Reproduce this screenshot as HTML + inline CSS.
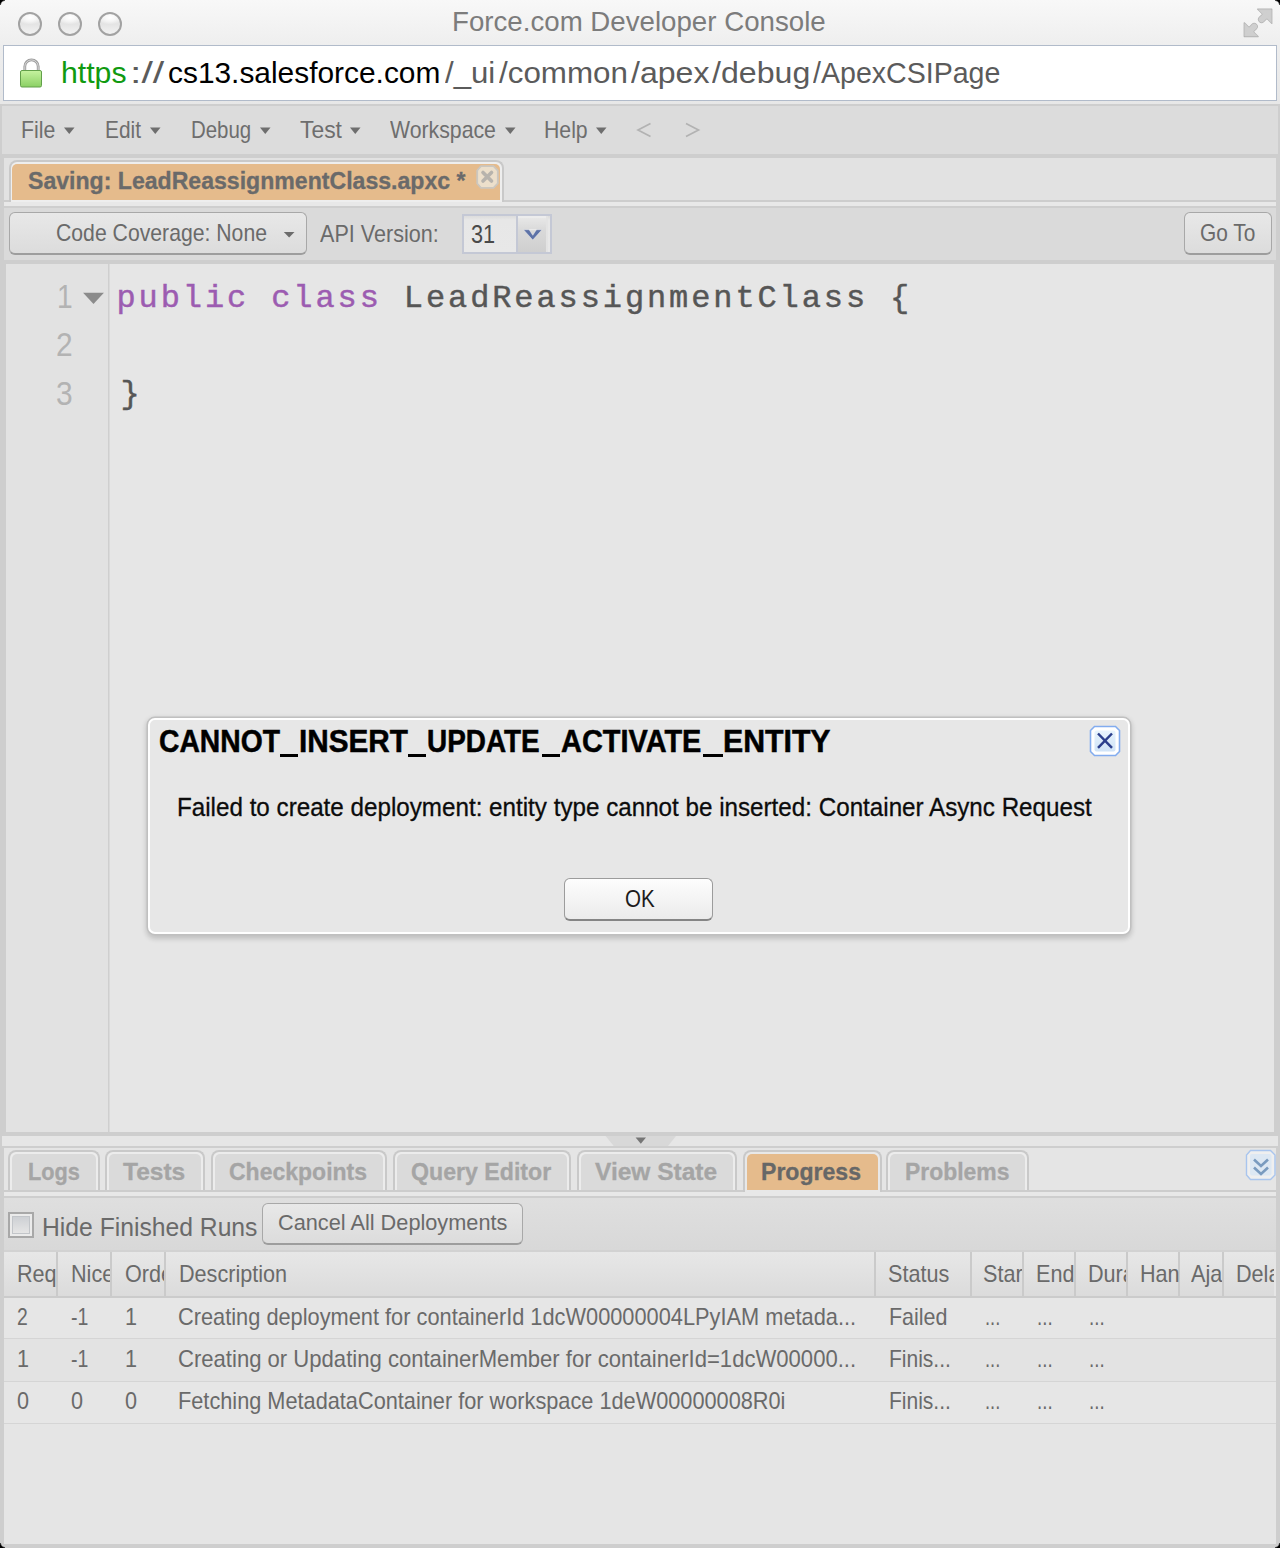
<!DOCTYPE html>
<html><head><meta charset="utf-8">
<style>
html,body{margin:0;padding:0;}
body{width:1280px;height:1548px;position:relative;overflow:hidden;background:#e5e5e5;font-family:"Liberation Sans",sans-serif;}
.a{position:absolute;}
.t{position:absolute;white-space:nowrap;line-height:1;}
</style></head><body>
<div class="a" style="left:0px;top:0px;width:1280px;height:1548px;background:#cecece;"></div>
<div class="a" style="left:0px;top:0px;width:1280px;height:104px;background:linear-gradient(#f8f8f8,#eeeeee 45%,#e7e7e7);"></div>
<div class="a" style="left:0;top:0;width:5px;height:5px;background:radial-gradient(circle at 5px 5px,transparent 3.5px,#000 5px);"></div>
<div class="a" style="left:1275px;top:0;width:5px;height:5px;background:radial-gradient(circle at 0 5px,transparent 3.5px,#000 5px);"></div>
<div class="a" style="left:0;top:1543px;width:5px;height:5px;background:radial-gradient(circle at 5px 0,transparent 3.5px,#000 5px);"></div>
<div class="a" style="left:1275px;top:1543px;width:5px;height:5px;background:radial-gradient(circle at 0 0,transparent 3.5px,#000 5px);"></div>
<div class="t" style="left:452.30px;top:8.29px;font-size:28px;font-family:'Liberation Sans',sans-serif;color:#7c7c7c;transform:scaleX(0.9881);transform-origin:0 0;">Force.com Developer Console</div>
<div class="a" style="left:18px;top:12px;width:24px;height:24px;box-sizing:border-box;border-radius:50%;border:2px solid #a2a2a2;background:radial-gradient(ellipse 60% 35% at 50% 18%,#ffffff 0,rgba(255,255,255,0.6) 50%,rgba(255,255,255,0) 100%),linear-gradient(#eeeeee,#e4e4e4 50%,#f2f2f2);"></div>
<div class="a" style="left:58px;top:12px;width:24px;height:24px;box-sizing:border-box;border-radius:50%;border:2px solid #a2a2a2;background:radial-gradient(ellipse 60% 35% at 50% 18%,#ffffff 0,rgba(255,255,255,0.6) 50%,rgba(255,255,255,0) 100%),linear-gradient(#eeeeee,#e4e4e4 50%,#f2f2f2);"></div>
<div class="a" style="left:98px;top:12px;width:24px;height:24px;box-sizing:border-box;border-radius:50%;border:2px solid #a2a2a2;background:radial-gradient(ellipse 60% 35% at 50% 18%,#ffffff 0,rgba(255,255,255,0.6) 50%,rgba(255,255,255,0) 100%),linear-gradient(#eeeeee,#e4e4e4 50%,#f2f2f2);"></div>
<svg class="a" style="left:1240px;top:6px" width="36" height="36" viewBox="0 0 36 36">
<g stroke="#b3b3b3" stroke-linejoin="round">
<path d="M17.6 3.2 L31.8 3.2 L31.8 17.4 Z" fill="#b3b3b3" stroke-width="1.2"/>
<path d="M26.2 9 L21.6 13.4" stroke-width="7.2" stroke-linecap="round"/>
<path d="M4.2 16.8 L4.2 30.6 L18.2 30.6 Z" fill="#b3b3b3" stroke-width="1.2"/>
<path d="M9.8 25 L14.2 20.6" stroke-width="7.2" stroke-linecap="round"/>
</g>
<g stroke="#cfcfcf" stroke-linejoin="round">
<path d="M18.4 3.8 L31.2 3.8 L31.2 16.6 Z" fill="#cfcfcf" stroke-width="0.6"/>
<path d="M26.2 9 L21.6 13.4" stroke-width="5.8" stroke-linecap="round"/>
<path d="M4.8 17.6 L4.8 30 L17.4 30 Z" fill="#cfcfcf" stroke-width="0.6"/>
<path d="M9.8 25 L14.2 20.6" stroke-width="5.8" stroke-linecap="round"/>
</g>
</svg>
<div class="a" style="left:3px;top:45px;width:1272px;height:54px;background:#fff;border:1px solid #b1bbca;"></div>
<svg class="a" style="left:19px;top:58px" width="25" height="31" viewBox="0 0 25 31">
<defs><linearGradient id="lg" x1="0" y1="0" x2="0" y2="1"><stop offset="0" stop-color="#c6f3a0"/><stop offset="1" stop-color="#8bd064"/></linearGradient></defs>
<path d="M5.8 13 V8.6 A6.7 6.7 0 0 1 19.2 8.6 V13" fill="none" stroke="#9b9b9b" stroke-width="2.8"/>
<path d="M5.8 13 V8.6 A6.7 6.7 0 0 1 19.2 8.6 V13" fill="none" stroke="#dedede" stroke-width="0.9"/>
<rect x="1.5" y="12.5" width="21" height="16.5" rx="1.5" fill="url(#lg)" stroke="#62a04a" stroke-width="1"/>
</svg>
<div class="t" style="left:60.50px;top:58.40px;font-size:30px;font-family:'Liberation Sans',sans-serif;color:#109a10;transform:scaleX(1.0077);transform-origin:0 0;">https</div>
<div class="t" style="left:130.00px;top:58.40px;font-size:30px;font-family:'Liberation Sans',sans-serif;color:#5b5b5b;transform:scaleX(1.3705);transform-origin:0 0;">://</div>
<div class="t" style="left:167.50px;top:58.40px;font-size:30px;font-family:'Liberation Sans',sans-serif;color:#000;transform:scaleX(0.9960);transform-origin:0 0;">cs13.salesforce.com</div>
<div class="t" style="left:444.70px;top:58.40px;font-size:30px;font-family:'Liberation Sans',sans-serif;color:#5b5b5b;transform:scaleX(1.0393);transform-origin:0 0;">/_ui</div>
<div class="t" style="left:498.60px;top:58.40px;font-size:30px;font-family:'Liberation Sans',sans-serif;color:#5b5b5b;transform:scaleX(1.0446);transform-origin:0 0;">/common</div>
<div class="t" style="left:631.00px;top:58.40px;font-size:30px;font-family:'Liberation Sans',sans-serif;color:#5b5b5b;transform:scaleX(1.0695);transform-origin:0 0;">/apex</div>
<div class="t" style="left:711.90px;top:58.40px;font-size:30px;font-family:'Liberation Sans',sans-serif;color:#5b5b5b;transform:scaleX(1.0708);transform-origin:0 0;">/debug</div>
<div class="t" style="left:812.60px;top:58.40px;font-size:30px;font-family:'Liberation Sans',sans-serif;color:#5b5b5b;transform:scaleX(0.9522);transform-origin:0 0;">/ApexCSIPage</div>
<div class="a" style="left:2px;top:106px;width:1276px;height:48px;background:#dcdcdc;"></div>
<div class="t" style="left:21.10px;top:117.58px;font-size:24px;font-family:'Liberation Sans',sans-serif;color:#6e6e6e;transform:scaleX(0.8863);transform-origin:0 0;">File</div>
<div class="t" style="left:105.00px;top:117.58px;font-size:24px;font-family:'Liberation Sans',sans-serif;color:#6e6e6e;transform:scaleX(0.8696);transform-origin:0 0;">Edit</div>
<div class="t" style="left:190.80px;top:117.58px;font-size:24px;font-family:'Liberation Sans',sans-serif;color:#6e6e6e;transform:scaleX(0.8515);transform-origin:0 0;">Debug</div>
<div class="t" style="left:300.00px;top:117.58px;font-size:24px;font-family:'Liberation Sans',sans-serif;color:#6e6e6e;transform:scaleX(0.9523);transform-origin:0 0;">Test</div>
<div class="t" style="left:390.00px;top:117.58px;font-size:24px;font-family:'Liberation Sans',sans-serif;color:#6e6e6e;transform:scaleX(0.8855);transform-origin:0 0;">Workspace</div>
<div class="t" style="left:544.00px;top:117.58px;font-size:24px;font-family:'Liberation Sans',sans-serif;color:#6e6e6e;transform:scaleX(0.8846);transform-origin:0 0;">Help</div>
<svg class="a" style="left:0;top:104px" width="720" height="50"><g fill="#6e6e6e"><path d="M64 23.5 h10.5 l-5.25 6.5z"/><path d="M150 23.5 h10.5 l-5.25 6.5z"/><path d="M260 23.5 h10.5 l-5.25 6.5z"/><path d="M350 23.5 h10.5 l-5.25 6.5z"/><path d="M505 23.5 h10.5 l-5.25 6.5z"/><path d="M596 23.5 h10.5 l-5.25 6.5z"/></g><g fill="none" stroke="#b2b2b2" stroke-width="1.7"><path d="M650.5 19.5 L638 26 L650.5 32.5"/><path d="M686 19.5 L698.5 26 L686 32.5"/></g></svg>
<div class="a" style="left:4px;top:158px;width:1272px;height:48px;background:#e2e2e2;"></div>
<div class="a" style="left:4px;top:200px;width:1272px;height:2px;background:#cdcdcd;"></div>
<div class="a" style="left:4px;top:202px;width:1272px;height:4px;background:#e8e8e8;"></div>
<div class="a" style="left:9px;top:160px;width:495px;height:42px;box-sizing:border-box;border:2px solid #c9c9c9;border-bottom:none;border-radius:8px 8px 0 0;background:#eeeeee;"></div>
<div class="a" style="left:12px;top:164px;width:488px;height:36px;border-radius:5px 5px 0 0;background:#e5bb8c;"></div>
<div class="t" style="left:28.40px;top:170.03px;font-size:23px;font-family:'Liberation Sans',sans-serif;font-weight:bold;color:#6a6a6a;transform:scaleX(1.0037);transform-origin:0 0;-webkit-text-stroke:0.3px currentColor;">Saving: LeadReassignmentClass.apxc *</div>
<svg class="a" style="left:476px;top:165px" width="23" height="24"><path d="M5 1.2 H17.5 L21.8 5.5 V18.5 L17.5 22.8 H5 L1.2 18.5 V5.5 Z" fill="#ecdfcb" stroke="#cbc7c0" stroke-width="1.8"/><path d="M7 7.5 L15.5 16 M15.5 7.5 L7 16" stroke="#b2afaa" stroke-width="3.6" stroke-linecap="round" opacity="0.9"/></svg>
<div class="a" style="left:4px;top:208px;width:1272px;height:52px;background:#dadada;"></div>
<div class="a" style="left:9px;top:212px;width:296px;height:40px;border:1px solid #a8a8a8;border-bottom:2px solid #9d9d9d;border-radius:6px;background:linear-gradient(#e8e8e8,#dcdcdc);"></div>
<div class="t" style="left:56.00px;top:221.77px;font-size:23.6px;font-family:'Liberation Sans',sans-serif;color:#6a6a6a;transform:scaleX(0.8986);transform-origin:0 0;">Code Coverage: None</div>
<svg class="a" style="left:280px;top:228px" width="20" height="14"><path d="M3.8 4 h10.7 l-5.35 5.6z" fill="#6c6c6c"/></svg>
<div class="t" style="left:320.00px;top:221.68px;font-size:24px;font-family:'Liberation Sans',sans-serif;color:#6a6a6a;transform:scaleX(0.8989);transform-origin:0 0;">API Version:</div>
<div class="a" style="left:462px;top:214px;width:86px;height:36px;border:2px solid #c4c8d5;background:linear-gradient(#dcdcdc 0,#e7e7e7 4px,#e8e8e8);"></div>
<div class="a" style="left:516px;top:216px;width:2px;height:36px;background:#c4c8d5;"></div>
<div class="a" style="left:518px;top:216px;width:30px;height:36px;background:linear-gradient(#e9e9e9,#d9d9d9 40%,#cfcfcf);box-shadow:inset -2px 0 0 #e3e3e3, inset 0 2px 0 #ececec;"></div>
<div class="t" style="left:471.00px;top:221.36px;font-size:26.5px;font-family:'Liberation Sans',sans-serif;color:#4a4a4a;transform:scaleX(0.8203);transform-origin:0 0;">31</div>
<svg class="a" style="left:516px;top:215px" width="35" height="38"><path d="M7.5 14.7 L26 14.7 L16.75 25 Z M13.2 14.7 L20.4 14.7 L16.8 20.3 Z" fill="#5d72a7" fill-rule="evenodd" stroke="#f2f2f2" stroke-width="0.8" stroke-opacity="0.6"/></svg>
<div class="a" style="left:1184px;top:212px;width:86px;height:40px;border:1px solid #a8a8a8;border-bottom:2px solid #9d9d9d;border-radius:6px;background:linear-gradient(#e8e8e8,#dcdcdc);"></div>
<div class="t" style="left:1200.30px;top:221.38px;font-size:24px;font-family:'Liberation Sans',sans-serif;color:#6a6a6a;transform:scaleX(0.8695);transform-origin:0 0;">Go To</div>
<div class="a" style="left:6px;top:264px;width:1268px;height:868px;background:#e6e6e6;"></div>
<div class="a" style="left:6px;top:264px;width:102px;height:868px;background:#e2e2e2;"></div>
<div class="a" style="left:108px;top:264px;width:1px;height:868px;background:#cfcfcf;"></div>
<div class="a" style="left:109px;top:264px;width:1px;height:868px;background:#dadada;"></div>
<div class="t" style="left:56.50px;top:280.16px;font-size:33px;font-family:'Liberation Sans',sans-serif;color:#b3b3b3;transform:scaleX(0.8533);transform-origin:0 0;">1</div>
<div class="t" style="left:55.50px;top:327.96px;font-size:33px;font-family:'Liberation Sans',sans-serif;color:#b3b3b3;transform:scaleX(0.9076);transform-origin:0 0;">2</div>
<div class="t" style="left:55.50px;top:376.56px;font-size:33px;font-family:'Liberation Sans',sans-serif;color:#b3b3b3;transform:scaleX(0.9076);transform-origin:0 0;">3</div>
<svg class="a" style="left:82px;top:291px" width="24" height="15"><path d="M1.1 1.75 h20.8 l-10.4 11.2z" fill="#8b8b8b"/></svg>
<div class="t" style="left:116.50px;top:283.28px;font-size:32px;font-family:'Liberation Mono',monospace;color:#565656;letter-spacing:2.9px;-webkit-text-stroke:0.45px currentColor;"><span style="color:#9c5cb1">public</span> <span style="color:#9c5cb1">class</span> LeadReassignmentClass {</div>
<div class="t" style="left:120.50px;top:378.98px;font-size:32px;font-family:'Liberation Mono',monospace;color:#565656;letter-spacing:2.9px;-webkit-text-stroke:0.45px currentColor;">}</div>
<div class="a" style="left:2px;top:1136px;width:1276px;height:10px;background:#e6e6e6;"></div>
<svg class="a" style="left:600px;top:1136px" width="80" height="10"><path d="M5.6 0 H76 L68 10 H13.75z" fill="#d8d8d8"/><path d="M35.6 1.5 H46 L40.8 7.8z" fill="#767676"/></svg>
<div class="a" style="left:4px;top:1148px;width:1272px;height:42px;background:#e5e5e5;"></div>
<div class="a" style="left:4px;top:1190px;width:1272px;height:2px;background:#cdcdcd;"></div>
<div class="a" style="left:4px;top:1192px;width:1272px;height:4px;background:#e8e8e8;"></div>
<div class="a" style="left:8px;top:1150px;width:92px;height:40px;box-sizing:border-box;border:2px solid #c9c9c9;border-bottom:none;border-radius:8px 8px 0 0;background:#ececec;"></div>
<div class="a" style="left:12px;top:1154px;width:84px;height:36px;border-radius:5px 5px 0 0;background:#dadada;"></div>
<div class="t" style="left:27.50px;top:1159.98px;font-size:24px;font-family:'Liberation Sans',sans-serif;font-weight:bold;color:#a5a5a5;transform:scaleX(0.9058);transform-origin:0 0;-webkit-text-stroke:0.3px currentColor;">Logs</div>
<div class="a" style="left:105px;top:1150px;width:100px;height:40px;box-sizing:border-box;border:2px solid #c9c9c9;border-bottom:none;border-radius:8px 8px 0 0;background:#ececec;"></div>
<div class="a" style="left:109px;top:1154px;width:92px;height:36px;border-radius:5px 5px 0 0;background:#dadada;"></div>
<div class="t" style="left:122.75px;top:1159.98px;font-size:24px;font-family:'Liberation Sans',sans-serif;font-weight:bold;color:#a5a5a5;transform:scaleX(1.0222);transform-origin:0 0;-webkit-text-stroke:0.3px currentColor;">Tests</div>
<div class="a" style="left:211px;top:1150px;width:176px;height:40px;box-sizing:border-box;border:2px solid #c9c9c9;border-bottom:none;border-radius:8px 8px 0 0;background:#ececec;"></div>
<div class="a" style="left:215px;top:1154px;width:168px;height:36px;border-radius:5px 5px 0 0;background:#dadada;"></div>
<div class="t" style="left:229.00px;top:1159.98px;font-size:24px;font-family:'Liberation Sans',sans-serif;font-weight:bold;color:#a5a5a5;transform:scaleX(0.9583);transform-origin:0 0;-webkit-text-stroke:0.3px currentColor;">Checkpoints</div>
<div class="a" style="left:393px;top:1150px;width:178px;height:40px;box-sizing:border-box;border:2px solid #c9c9c9;border-bottom:none;border-radius:8px 8px 0 0;background:#ececec;"></div>
<div class="a" style="left:397px;top:1154px;width:170px;height:36px;border-radius:5px 5px 0 0;background:#dadada;"></div>
<div class="t" style="left:411.30px;top:1159.98px;font-size:24px;font-family:'Liberation Sans',sans-serif;font-weight:bold;color:#a5a5a5;transform:scaleX(0.9642);transform-origin:0 0;-webkit-text-stroke:0.3px currentColor;">Query Editor</div>
<div class="a" style="left:577px;top:1150px;width:160px;height:40px;box-sizing:border-box;border:2px solid #c9c9c9;border-bottom:none;border-radius:8px 8px 0 0;background:#ececec;"></div>
<div class="a" style="left:581px;top:1154px;width:152px;height:36px;border-radius:5px 5px 0 0;background:#dadada;"></div>
<div class="t" style="left:595.00px;top:1159.98px;font-size:24px;font-family:'Liberation Sans',sans-serif;font-weight:bold;color:#a5a5a5;transform:scaleX(1.0201);transform-origin:0 0;-webkit-text-stroke:0.3px currentColor;">View State</div>
<div class="a" style="left:743px;top:1150px;width:139px;height:42px;box-sizing:border-box;border:2px solid #c9c9c9;border-bottom:none;border-radius:8px 8px 0 0;background:#e8e8e8;"></div>
<div class="a" style="left:747px;top:1154px;width:131px;height:36px;border-radius:5px 5px 0 0;background:#e5bb8c;"></div>
<div class="t" style="left:761.00px;top:1159.98px;font-size:24px;font-family:'Liberation Sans',sans-serif;font-weight:bold;color:#676767;transform:scaleX(0.9606);transform-origin:0 0;-webkit-text-stroke:0.3px currentColor;">Progress</div>
<div class="a" style="left:886px;top:1150px;width:143px;height:40px;box-sizing:border-box;border:2px solid #c9c9c9;border-bottom:none;border-radius:8px 8px 0 0;background:#ececec;"></div>
<div class="a" style="left:890px;top:1154px;width:135px;height:36px;border-radius:5px 5px 0 0;background:#dadada;"></div>
<div class="t" style="left:905.00px;top:1159.98px;font-size:24px;font-family:'Liberation Sans',sans-serif;font-weight:bold;color:#a5a5a5;transform:scaleX(0.9552);transform-origin:0 0;-webkit-text-stroke:0.3px currentColor;">Problems</div>
<svg class="a" style="left:1245px;top:1149px" width="32" height="32"><path d="M5.5 1.5 H25.5 L30 6 V26 L25.5 30.5 H5.5 L1.5 26 V6 Z" fill="#efefef" stroke="#a9c5ee" stroke-width="1.4"/><rect x="5" y="5" width="21.5" height="21.5" rx="2" fill="#dde8f3"/><g fill="none" stroke="#7a9bbf" stroke-width="2.6"><path d="M9 10.5 L16 17 L23 10.5"/><path d="M9 18.5 L16 25 L23 18.5"/></g></svg>
<div class="a" style="left:4px;top:1198px;width:1272px;height:52px;background:linear-gradient(#dfdfdf,#d8d8d8);"></div>
<div class="a" style="left:8px;top:1212px;width:26px;height:26px;box-sizing:border-box;border:2px solid #a8a8a8;background:#ebebeb;"></div>
<div class="a" style="left:12px;top:1216px;width:18px;height:18px;box-sizing:border-box;border:1.5px solid #c2c5c9;background:linear-gradient(#cdd0d4,#e5e5e5);"></div>
<div class="t" style="left:41.50px;top:1214.82px;font-size:25.6px;font-family:'Liberation Sans',sans-serif;color:#6a6a6a;transform:scaleX(0.9646);transform-origin:0 0;">Hide Finished Runs</div>
<div class="a" style="left:262px;top:1203px;width:259px;height:39px;border:1px solid #a8a8a8;border-bottom:2px solid #9d9d9d;border-radius:6px;background:linear-gradient(#e8e8e8,#dcdcdc);"></div>
<div class="t" style="left:278.30px;top:1212.23px;font-size:22.4px;font-family:'Liberation Sans',sans-serif;color:#6a6a6a;transform:scaleX(0.9700);transform-origin:0 0;">Cancel All Deployments</div>
<div class="a" style="left:4px;top:1250px;width:1272px;height:294px;background:#e5e5e5;"></div>
<div class="a" style="left:4px;top:1250px;width:1272px;height:2px;background:#d2d2d2;"></div>
<div class="a" style="left:4px;top:1252px;width:1270px;height:44px;background:linear-gradient(#e7e7e7,#dbdbdb);"></div>
<div class="a" style="left:4px;top:1296px;width:1272px;height:2px;background:#cbcbcb;"></div>
<div class="a" style="left:56px;top:1252px;width:2px;height:44px;background:#cacaca;"></div>
<div class="a" style="left:110px;top:1252px;width:2px;height:44px;background:#cacaca;"></div>
<div class="a" style="left:164px;top:1252px;width:2px;height:44px;background:#cacaca;"></div>
<div class="a" style="left:874px;top:1252px;width:2px;height:44px;background:#cacaca;"></div>
<div class="a" style="left:970px;top:1252px;width:2px;height:44px;background:#cacaca;"></div>
<div class="a" style="left:1022px;top:1252px;width:2px;height:44px;background:#cacaca;"></div>
<div class="a" style="left:1074px;top:1252px;width:2px;height:44px;background:#cacaca;"></div>
<div class="a" style="left:1126px;top:1252px;width:2px;height:44px;background:#cacaca;"></div>
<div class="a" style="left:1178px;top:1252px;width:2px;height:44px;background:#cacaca;"></div>
<div class="a" style="left:1222px;top:1252px;width:2px;height:44px;background:#cacaca;"></div>
<div class="a" style="left:14.899999999999999px;top:1255.68px;width:42px;height:34px;overflow:hidden;"><div class="t" style="left:2.00px;top:6px;font-size:24px;font-family:'Liberation Sans',sans-serif;color:#6a6a6a;transform:scaleX(0.9);transform-origin:0 0;">Req</div></div>
<div class="a" style="left:69.25px;top:1255.68px;width:41px;height:34px;overflow:hidden;"><div class="t" style="left:2.00px;top:6px;font-size:24px;font-family:'Liberation Sans',sans-serif;color:#6a6a6a;transform:scaleX(0.9);transform-origin:0 0;">Nice</div></div>
<div class="a" style="left:122.7px;top:1255.68px;width:41px;height:34px;overflow:hidden;"><div class="t" style="left:2.00px;top:6px;font-size:24px;font-family:'Liberation Sans',sans-serif;color:#6a6a6a;transform:scaleX(0.9);transform-origin:0 0;">Order</div></div>
<div class="a" style="left:177px;top:1255.68px;width:698px;height:34px;overflow:hidden;"><div class="t" style="left:2.00px;top:6px;font-size:24px;font-family:'Liberation Sans',sans-serif;color:#6a6a6a;transform:scaleX(0.9);transform-origin:0 0;">Description</div></div>
<div class="a" style="left:886px;top:1255.68px;width:85px;height:34px;overflow:hidden;"><div class="t" style="left:2.00px;top:6px;font-size:24px;font-family:'Liberation Sans',sans-serif;color:#6a6a6a;transform:scaleX(0.9);transform-origin:0 0;">Status</div></div>
<div class="a" style="left:981.4px;top:1255.68px;width:41px;height:34px;overflow:hidden;"><div class="t" style="left:2.00px;top:6px;font-size:24px;font-family:'Liberation Sans',sans-serif;color:#6a6a6a;transform:scaleX(0.9);transform-origin:0 0;">Start</div></div>
<div class="a" style="left:1034.25px;top:1255.68px;width:40px;height:34px;overflow:hidden;"><div class="t" style="left:2.00px;top:6px;font-size:24px;font-family:'Liberation Sans',sans-serif;color:#6a6a6a;transform:scaleX(0.9);transform-origin:0 0;">End</div></div>
<div class="a" style="left:1086.25px;top:1255.68px;width:40px;height:34px;overflow:hidden;"><div class="t" style="left:2.00px;top:6px;font-size:24px;font-family:'Liberation Sans',sans-serif;color:#6a6a6a;transform:scaleX(0.9);transform-origin:0 0;">Duration</div></div>
<div class="a" style="left:1137.85px;top:1255.68px;width:41px;height:34px;overflow:hidden;"><div class="t" style="left:2.00px;top:6px;font-size:24px;font-family:'Liberation Sans',sans-serif;color:#6a6a6a;transform:scaleX(0.9);transform-origin:0 0;">Handler</div></div>
<div class="a" style="left:1189.4px;top:1255.68px;width:33px;height:34px;overflow:hidden;"><div class="t" style="left:2.00px;top:6px;font-size:24px;font-family:'Liberation Sans',sans-serif;color:#6a6a6a;transform:scaleX(0.9);transform-origin:0 0;">Ajax</div></div>
<div class="a" style="left:1234.1px;top:1255.68px;width:40px;height:34px;overflow:hidden;"><div class="t" style="left:2.00px;top:6px;font-size:24px;font-family:'Liberation Sans',sans-serif;color:#6a6a6a;transform:scaleX(0.9);transform-origin:0 0;">Delay</div></div>
<div class="a" style="left:4px;top:1298px;width:1272px;height:40px;background:#e6e6e6;"></div>
<div class="a" style="left:4px;top:1338px;width:1272px;height:1px;background:#d5d5d5;"></div>
<div class="t" style="left:16.70px;top:1305.48px;font-size:24px;font-family:'Liberation Sans',sans-serif;color:#6a6a6a;transform:scaleX(0.8045);transform-origin:0 0;">2</div>
<div class="t" style="left:70.80px;top:1305.48px;font-size:24px;font-family:'Liberation Sans',sans-serif;color:#6a6a6a;transform:scaleX(0.8122);transform-origin:0 0;">-1</div>
<div class="t" style="left:125.00px;top:1305.48px;font-size:24px;font-family:'Liberation Sans',sans-serif;color:#6a6a6a;transform:scaleX(0.9);transform-origin:0 0;">1</div>
<div class="t" style="left:178.30px;top:1305.48px;font-size:24px;font-family:'Liberation Sans',sans-serif;color:#6a6a6a;transform:scaleX(0.9076);transform-origin:0 0;">Creating deployment for containerId 1dcW00000004LPyIAM metada...</div>
<div class="t" style="left:888.60px;top:1305.48px;font-size:24px;font-family:'Liberation Sans',sans-serif;color:#6a6a6a;transform:scaleX(0.8945);transform-origin:0 0;">Failed</div>
<div class="t" style="left:985.20px;top:1305.48px;font-size:24px;font-family:'Liberation Sans',sans-serif;color:#6a6a6a;transform:scaleX(0.7650);transform-origin:0 0;">...</div>
<div class="t" style="left:1037.00px;top:1305.48px;font-size:24px;font-family:'Liberation Sans',sans-serif;color:#6a6a6a;transform:scaleX(0.7800);transform-origin:0 0;">...</div>
<div class="t" style="left:1088.75px;top:1305.48px;font-size:24px;font-family:'Liberation Sans',sans-serif;color:#6a6a6a;transform:scaleX(0.7825);transform-origin:0 0;">...</div>
<div class="a" style="left:4px;top:1339px;width:1272px;height:42px;background:#e3e3e3;"></div>
<div class="a" style="left:4px;top:1381px;width:1272px;height:1px;background:#d5d5d5;"></div>
<div class="t" style="left:16.70px;top:1347.08px;font-size:24px;font-family:'Liberation Sans',sans-serif;color:#6a6a6a;transform:scaleX(0.9);transform-origin:0 0;">1</div>
<div class="t" style="left:70.80px;top:1347.08px;font-size:24px;font-family:'Liberation Sans',sans-serif;color:#6a6a6a;transform:scaleX(0.8122);transform-origin:0 0;">-1</div>
<div class="t" style="left:125.00px;top:1347.08px;font-size:24px;font-family:'Liberation Sans',sans-serif;color:#6a6a6a;transform:scaleX(0.9);transform-origin:0 0;">1</div>
<div class="t" style="left:178.30px;top:1347.08px;font-size:24px;font-family:'Liberation Sans',sans-serif;color:#6a6a6a;transform:scaleX(0.9200);transform-origin:0 0;">Creating or Updating containerMember for containerId=1dcW00000...</div>
<div class="t" style="left:888.60px;top:1347.08px;font-size:24px;font-family:'Liberation Sans',sans-serif;color:#6a6a6a;transform:scaleX(0.8755);transform-origin:0 0;">Finis...</div>
<div class="t" style="left:985.20px;top:1347.08px;font-size:24px;font-family:'Liberation Sans',sans-serif;color:#6a6a6a;transform:scaleX(0.7650);transform-origin:0 0;">...</div>
<div class="t" style="left:1037.00px;top:1347.08px;font-size:24px;font-family:'Liberation Sans',sans-serif;color:#6a6a6a;transform:scaleX(0.7800);transform-origin:0 0;">...</div>
<div class="t" style="left:1088.75px;top:1347.08px;font-size:24px;font-family:'Liberation Sans',sans-serif;color:#6a6a6a;transform:scaleX(0.7825);transform-origin:0 0;">...</div>
<div class="a" style="left:4px;top:1382px;width:1272px;height:41px;background:#e6e6e6;"></div>
<div class="a" style="left:4px;top:1423px;width:1272px;height:1px;background:#d5d5d5;"></div>
<div class="t" style="left:16.70px;top:1389.08px;font-size:24px;font-family:'Liberation Sans',sans-serif;color:#6a6a6a;transform:scaleX(0.9);transform-origin:0 0;">0</div>
<div class="t" style="left:70.80px;top:1389.08px;font-size:24px;font-family:'Liberation Sans',sans-serif;color:#6a6a6a;transform:scaleX(0.9);transform-origin:0 0;">0</div>
<div class="t" style="left:125.00px;top:1389.08px;font-size:24px;font-family:'Liberation Sans',sans-serif;color:#6a6a6a;transform:scaleX(0.9);transform-origin:0 0;">0</div>
<div class="t" style="left:178.30px;top:1389.08px;font-size:24px;font-family:'Liberation Sans',sans-serif;color:#6a6a6a;transform:scaleX(0.9052);transform-origin:0 0;">Fetching MetadataContainer for workspace 1deW00000008R0i</div>
<div class="t" style="left:888.60px;top:1389.08px;font-size:24px;font-family:'Liberation Sans',sans-serif;color:#6a6a6a;transform:scaleX(0.8755);transform-origin:0 0;">Finis...</div>
<div class="t" style="left:985.20px;top:1389.08px;font-size:24px;font-family:'Liberation Sans',sans-serif;color:#6a6a6a;transform:scaleX(0.7650);transform-origin:0 0;">...</div>
<div class="t" style="left:1037.00px;top:1389.08px;font-size:24px;font-family:'Liberation Sans',sans-serif;color:#6a6a6a;transform:scaleX(0.7800);transform-origin:0 0;">...</div>
<div class="t" style="left:1088.75px;top:1389.08px;font-size:24px;font-family:'Liberation Sans',sans-serif;color:#6a6a6a;transform:scaleX(0.7825);transform-origin:0 0;">...</div>
<div class="a" style="left:148px;top:718px;width:978px;height:212px;border:2px solid #fff;border-radius:7px;background:#e7e7e7;box-shadow:0 0 0 1.5px #c0c0c0,0 2.5px 5px 2px rgba(0,0,0,0.16);"></div>
<div class="t" style="left:158.60px;top:726.18px;font-size:30.5px;font-family:'Liberation Sans',sans-serif;font-weight:bold;color:#000;transform:scaleX(0.9272);transform-origin:0 0;-webkit-text-stroke:0.5px #000;">CANNOT</div>
<div class="t" style="left:299.00px;top:726.18px;font-size:30.5px;font-family:'Liberation Sans',sans-serif;font-weight:bold;color:#000;transform:scaleX(0.9732);transform-origin:0 0;-webkit-text-stroke:0.5px #000;">INSERT</div>
<div class="t" style="left:426.80px;top:726.18px;font-size:30.5px;font-family:'Liberation Sans',sans-serif;font-weight:bold;color:#000;transform:scaleX(0.9147);transform-origin:0 0;-webkit-text-stroke:0.5px #000;">UPDATE</div>
<div class="t" style="left:560.60px;top:726.18px;font-size:30.5px;font-family:'Liberation Sans',sans-serif;font-weight:bold;color:#000;transform:scaleX(0.9486);transform-origin:0 0;-webkit-text-stroke:0.5px #000;">ACTIVATE</div>
<div class="t" style="left:723.00px;top:726.18px;font-size:30.5px;font-family:'Liberation Sans',sans-serif;font-weight:bold;color:#000;transform:scaleX(0.9917);transform-origin:0 0;-webkit-text-stroke:0.5px #000;">ENTITY</div>
<div class="a" style="left:279.7px;top:754px;width:18.4px;height:3px;background:#000;"></div>
<div class="a" style="left:407.9px;top:754px;width:18.4px;height:3px;background:#000;"></div>
<div class="a" style="left:541.6px;top:754px;width:18.7px;height:3px;background:#000;"></div>
<div class="a" style="left:702.5px;top:754px;width:20.3px;height:3px;background:#000;"></div>
<div class="t" style="left:177.40px;top:793.89px;font-size:26px;font-family:'Liberation Sans',sans-serif;color:#0c0c0c;transform:scaleX(0.9308);transform-origin:0 0;-webkit-text-stroke:0.3px #0c0c0c;">Failed to create deployment: entity type cannot be inserted: Container Async Request</div>
<svg class="a" style="left:1089px;top:725px" width="32" height="32"><defs><linearGradient id="cg" x1="0" y1="0" x2="0" y2="1"><stop offset="0" stop-color="#e8f4fd"/><stop offset="1" stop-color="#cfe3f7"/></linearGradient></defs><path d="M5.5 1.5 H26.5 L30.5 5.5 V26.5 L26.5 30.5 H5.5 L1.5 26.5 V5.5 Z" fill="#fff" stroke="#82acef" stroke-width="1.6"/><rect x="5.5" y="5.5" width="21" height="21" rx="2" fill="url(#cg)"/><path d="M9 8.5 L23 22.8 M23 8.5 L9 22.8" stroke="#2b3f8c" stroke-width="2.5"/></svg>
<div class="a" style="left:564px;top:878px;width:147px;height:40px;border:1px solid #9c9c9c;border-bottom:2px solid #858585;border-radius:6px;background:linear-gradient(#fdfdfd,#ebebeb);"></div>
<div class="t" style="left:625.00px;top:887.38px;font-size:24px;font-family:'Liberation Sans',sans-serif;color:#1c1c1c;transform:scaleX(0.8588);transform-origin:0 0;">OK</div>
</body></html>
